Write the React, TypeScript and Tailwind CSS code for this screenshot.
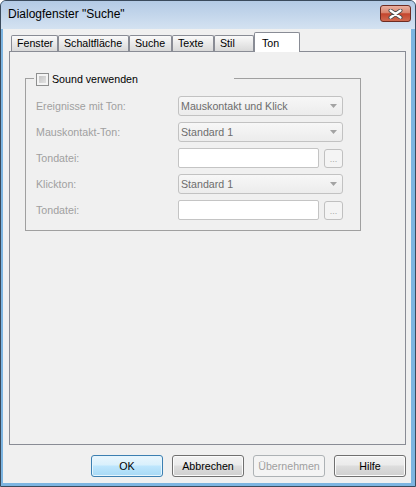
import React from "react";

const tabs = [
  { label: "Fenster", w: "w-[47px]" },
  { label: "Schaltfläche", w: "w-[71px]" },
  { label: "Suche", w: "w-[43px]" },
  { label: "Texte", w: "w-[42px]" },
  { label: "Stil", w: "w-[40px]" },
];

function Arrow() {
  return (
    <svg width="7" height="4" viewBox="0 0 7 4">
      <path d="M0 0h7L3.5 4z" fill="#a3a3a3" />
    </svg>
  );
}

function Combo({ value }: { value: string }) {
  return (
    <div className="flex h-[20px] w-[165px] items-center justify-between rounded-[3px] border border-[#c2c2c2] bg-gradient-to-b from-[#f7f7f7] to-[#ececec] pl-[2px] pr-[5px] text-[#6d6d6d]">
      <span>{value}</span>
      <Arrow />
    </div>
  );
}

function FileInput() {
  return (
    <div className="flex items-center gap-[5px]">
      <div className="h-[20px] w-[141px] rounded-[2px] border border-[#c4c4c4] bg-white" />
      <div className="flex h-[19px] w-[19px] items-end justify-center rounded-[3px] border border-[#c0c0c0] bg-[#f4f4f4] pb-[3px] text-[9px] leading-none text-[#a8a8a8]">
        ...
      </div>
    </div>
  );
}

function DlgButton({ label, kind }: { label: string; kind?: "default" | "disabled" }) {
  let cls =
    "border-[#707070] bg-[linear-gradient(#f2f2f2,#ebebeb_45%,#dddddd_50%,#cfcfcf)] shadow-[inset_0_0_0_1px_#fbfbfb] text-black";
  if (kind === "default")
    cls =
      "border-[#3c7fb1] bg-[linear-gradient(#eaf6fd,#d9f0fc_45%,#bee6fd_50%,#a7d9f5)] shadow-[inset_0_0_0_1px_#e6f5fd] text-black";
  if (kind === "disabled") cls = "border-[#adb2b5] bg-[#f4f4f4] text-[#a0a0a0]";
  return (
    <div className={`flex h-[22px] w-[72px] items-center justify-center rounded-[3px] border ${cls}`}>
      {label}
    </div>
  );
}

export default function App() {
  return (
    <div className="flex h-[487px] w-[416px] flex-col overflow-hidden rounded-t-[6px] border border-[#3a4a5c] bg-[#7db5e1] font-['Liberation_Sans',Arial,sans-serif] text-[10.67px] leading-[13px] text-black">
      {/* title bar */}
      <div className="flex h-[28px] items-start justify-between bg-gradient-to-b from-[#b3cae5] to-[#d4e2f1] pl-[7px] pr-[4px]">
        <span className="mt-[6px] text-[12px] leading-[14px]">Dialogfenster "Suche"</span>
        <div className="mt-[4px] flex h-[17px] w-[31px] items-center justify-center rounded-[3px] border border-[#6e2c22] bg-[linear-gradient(#eab0a0,#d9846d_45%,#c4452d_52%,#cf6a50)]">
          <svg width="15" height="10" viewBox="0 0 15 10">
            <path d="M2.5 1.5 12.5 8.5M12.5 1.5 2.5 8.5" stroke="#4a4a4a" strokeWidth="4" strokeLinecap="round" />
            <path d="M2.5 1.5 12.5 8.5M12.5 1.5 2.5 8.5" stroke="#ffffff" strokeWidth="2.2" strokeLinecap="round" />
          </svg>
        </div>
      </div>

      {/* client area */}
      <div className="mb-[3px] ml-[2px] mr-[4px] flex h-[454px] flex-col bg-[#f0f0f0] pl-[6px] pr-[5px] pt-[3px]">
        <div className="relative z-10 flex h-[20px] items-end pl-[2px]">
          {tabs.map((t) => (
            <div
              key={t.label}
              className={`mb-[1px] flex h-[16px] ${t.w} items-center rounded-t-[2px] border border-b-0 border-[#898c95] bg-gradient-to-b from-[#fafafa] to-[#d9d9d9] pl-[5px]`}
            >
              {t.label}
            </div>
          ))}
          <div className="flex h-[20px] w-[46px] items-start rounded-t-[2px] border border-b-0 border-[#898c95] bg-white pl-[7px] pt-[4px]">
            Ton
          </div>
        </div>

        <div className="-mt-[1px] h-[394px] border border-[#898c95] bg-[#f0f0f0] pl-[15px] pt-[26px]">
          <div className="relative w-[336px] border border-[#a0a0a0] pb-[10px] pl-[10px] pt-[17px]">
            <div className="absolute left-[8px] top-[-7px] flex h-[15px] w-[200px] items-center gap-[3px] bg-[#f0f0f0] pl-[2px]">
              <div className="h-[13px] w-[13px] border border-[#8e8f8f] bg-[#f4f4f4] p-[2px]">
                <div className="h-full w-full bg-gradient-to-br from-[#c4c4c4] to-[#e2e2e2]" />
              </div>
              <span className="text-black">Sound verwenden</span>
            </div>

            <div className="grid grid-cols-[142px_1fr] items-center gap-y-[6px] text-[#a0a0a0]">
              <span>Ereignisse mit Ton:</span>
              <Combo value="Mauskontakt und Klick" />
              <span>Mauskontakt-Ton:</span>
              <Combo value="Standard 1" />
              <span>Tondatei:</span>
              <FileInput />
              <span>Klickton:</span>
              <Combo value="Standard 1" />
              <span>Tondatei:</span>
              <FileInput />
            </div>
          </div>
        </div>

        <div className="mt-[10px] flex justify-end gap-[9px]">
          <DlgButton label="OK" kind="default" />
          <DlgButton label="Abbrechen" />
          <DlgButton label="Übernehmen" kind="disabled" />
          <DlgButton label="Hilfe" />
        </div>
      </div>
    </div>
  );
}
